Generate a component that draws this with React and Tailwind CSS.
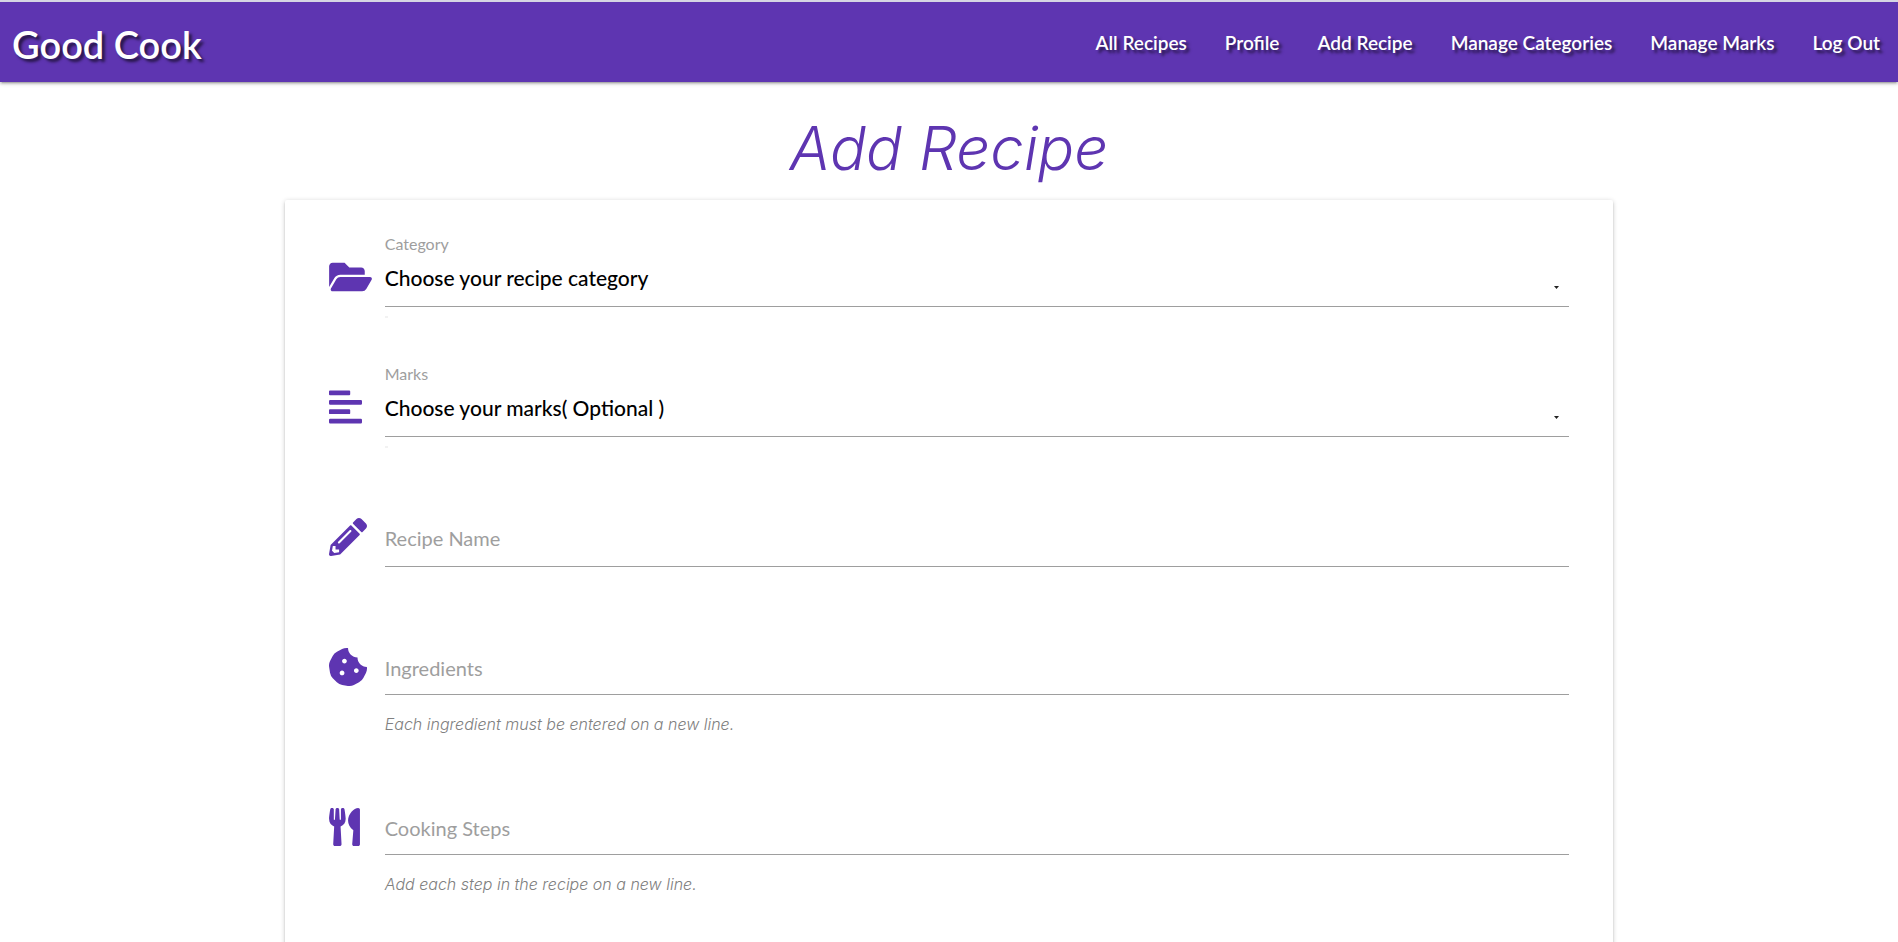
import React from "react";
import {
  FaFolderOpen,
  FaAlignLeft,
  FaPencilAlt,
  FaCookieBite,
  FaUtensils,
} from "react-icons/fa";

const links = [
  "All Recipes",
  "Profile",
  "Add Recipe",
  "Manage Categories",
  "Manage Marks",
  "Log Out",
];

function Navbar() {
  return (
    <header className="border-t-2 border-[#d5d5e3] bg-[#5e35b1] shadow-[0_2px_2px_0_rgba(0,0,0,0.14),0_3px_1px_-2px_rgba(0,0,0,0.12),0_1px_5px_0_rgba(0,0,0,0.2)]">
      <nav className="flex h-20 items-center justify-between pl-3 pr-[18px] text-white [text-shadow:3px_3px_3px_rgba(0,0,0,0.6)]">
        <a href="#home" className="pt-1 text-[38px] leading-[60px] font-semibold">
          Good Cook
        </a>
        <ul className="flex gap-[38px] pt-0.5 text-[19px] leading-7 font-semibold">
          {links.map((link) => (
            <li key={link}>
              <a href="#nav">{link}</a>
            </li>
          ))}
        </ul>
      </nav>
    </header>
  );
}

function Row({ icon: Icon, iconWidth = "w-[38px]", children }) {
  return (
    <div className="flex">
      <div className="flex h-[46px] w-14 shrink-0 items-center text-[#5e35b1]">
        <Icon className={"h-[38px] " + iconWidth} aria-hidden="true" />
      </div>
      {children}
    </div>
  );
}

function SelectField({ id, label, icon, iconWidth, placeholder }) {
  return (
    <div className="mb-[57px]">
      <label htmlFor={id} className="ml-14 block text-[16px] leading-5 text-[#9e9e9e]">
        {label}
      </label>
      <Row icon={icon} iconWidth={iconWidth}>
        <div className="relative grow border-b border-[#9e9e9e]">
          <select
            id={id}
            className="block h-[52px] w-full appearance-none bg-transparent pb-1 text-[21px] font-medium text-black outline-none"
          >
            <option>{placeholder}</option>
          </select>
          <svg
            viewBox="0 0 5 3"
            className="pointer-events-none absolute right-[10px] bottom-[17px] h-[3px] w-[5px]"
            aria-hidden="true"
          >
            <path d="M0 0h5L2.500 3z" fill="#222" />
          </svg>
          <span className="absolute -bottom-3 left-0 h-[2px] w-[3px] bg-[#f2f2f2]" />
        </div>
      </Row>
    </div>
  );
}

function InputField({ id, label, icon }) {
  return (
    <div className="mb-[57px] pt-5">
      <Row icon={icon}>
        <div className="grid grow items-center border-b border-[#9e9e9e]">
          <label htmlFor={id} className="pb-1 text-[20px] text-[#9e9e9e] [grid-area:1/1]">
            {label}
          </label>
          <input
            id={id}
            type="text"
            className="h-[52px] w-full bg-transparent text-[20px] outline-none [grid-area:1/1]"
          />
        </div>
      </Row>
    </div>
  );
}

function TextareaField({ id, label, icon, iconWidth, hint }) {
  return (
    <div className="mb-[50px] pt-5">
      <Row icon={icon} iconWidth={iconWidth}>
        <div className="grid grow items-center border-b border-[#9e9e9e]">
          <label htmlFor={id} className="pb-0.5 text-[20px] text-[#9e9e9e] [grid-area:1/1]">
            {label}
          </label>
          <textarea
            id={id}
            aria-describedby={id + "-hint"}
            className="block h-[50px] w-full resize-none bg-transparent py-3 text-[20px] outline-none [grid-area:1/1]"
          />
        </div>
      </Row>
      <p
        id={id + "-hint"}
        className="mt-[19px] ml-14 font-[Inter,sans-serif] text-[16px] leading-5 font-light text-[#808080] italic"
      >
        {hint}
      </p>
    </div>
  );
}

export default function App() {
  return (
    <div className="h-screen overflow-hidden bg-white font-[Lato,sans-serif]">
      <Navbar />
      <main className="mx-auto w-[70%]">
        <h1 className="pt-[30px] pb-4 text-center font-[Inter,sans-serif] text-[60px] leading-[72px] font-light text-[#5e35b1] italic">
          Add Recipe
        </h1>
        <form className="rounded-[2px] bg-white px-11 pt-[34px] pb-6 shadow-[0_2px_2px_0_rgba(0,0,0,0.14),0_3px_1px_-2px_rgba(0,0,0,0.12),0_1px_5px_0_rgba(0,0,0,0.2)]">
          <SelectField
            id="category"
            label="Category"
            icon={FaFolderOpen}
            iconWidth="w-[43px]"
            placeholder="Choose your recipe category"
          />
          <SelectField
            id="marks"
            label="Marks"
            icon={FaAlignLeft}
            iconWidth="w-[33px]"
            placeholder="Choose your marks( Optional )"
          />
          <InputField id="name" label="Recipe Name" icon={FaPencilAlt} />
          <TextareaField
            id="ingredients"
            label="Ingredients"
            icon={FaCookieBite}
            hint="Each ingredient must be entered on a new line."
          />
          <TextareaField
            id="steps"
            label="Cooking Steps"
            icon={FaUtensils}
            iconWidth="w-[31px]"
            hint="Add each step in the recipe on a new line."
          />
        </form>
      </main>
    </div>
  );
}
